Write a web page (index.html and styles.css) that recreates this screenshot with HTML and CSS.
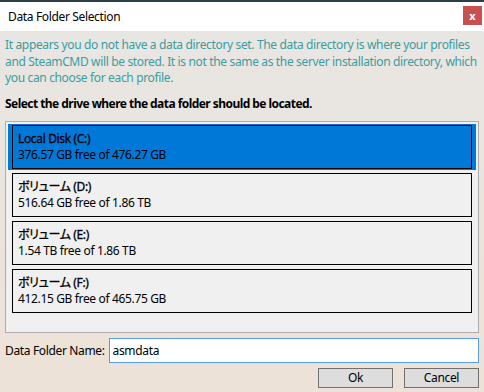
FILE: index.html
```html
<!DOCTYPE html>
<html>
<head>
    <title>Data Folder Selection</title>
    <link rel="stylesheet" href="styles.css">
</head>
<body>
    <div class="window">
        <div class="titlebar">
            <span class="title">Data Folder Selection</span>
            <span class="close">x</span>
        </div>
        <div class="content">
            <p class="info">It appears you do not have a data directory set. The data directory is where your profiles and SteamCMD will be stored. It is not the same as the server installation directory, which you can choose for each profile.</p>
            <p class="prompt">Select the drive where the data folder should be located.</p>

            <div class="drive-list">
                <div class="drive selected">
                    <div class="drive-box">
                        <div class="drive-name">Local Disk (C:)</div>
                        <div class="drive-space">376.57 GB free of 476.27 GB</div>
                    </div>
                </div>
                <div class="drive">
                    <div class="drive-box">
                        <div class="drive-name">ボリューム (D:)</div>
                        <div class="drive-space">516.64 GB free of 1.86 TB</div>
                    </div>
                </div>
                <div class="drive">
                    <div class="drive-box">
                        <div class="drive-name">ボリューム (E:)</div>
                        <div class="drive-space">1.54 TB free of 1.86 TB</div>
                    </div>
                </div>
                <div class="drive">
                    <div class="drive-box">
                        <div class="drive-name">ボリューム (F:)</div>
                        <div class="drive-space">412.15 GB free of 465.75 GB</div>
                    </div>
                </div>
            </div>

            <div class="name-row">
                <label class="name-label">Data Folder Name:</label>
                <div class="name-input">asmdata</div>
            </div>

            <div class="buttons">
                <button class="btn">Ok</button>
                <button class="btn">Cancel</button>
            </div>
        </div>
    </div>
</body>
</html>
```

FILE: styles.css
```css
html, body {
    margin: 0;
    padding: 0;
}
body {
    font-family: "Noto Sans", "Noto Sans CJK JP", sans-serif;
    font-size: 12px;
    letter-spacing: -0.35px;
    font-feature-settings: "palt";
    color: #000;
    width: 484px;
    height: 392px;
    overflow: hidden;
}
.window {
    display: flex;
    flex-direction: column;
    height: 392px;
}
.titlebar {
    height: 29px;
    border-top: 2px solid #2c3e45;
    background: white;
    display: flex;
    align-items: center;
    justify-content: space-between;
    padding-left: 8px;
}
.title {
    font-size: 12px;
}
.close {
    width: 19px;
    height: 19px;
    margin-right: 2px;
    margin-top: -2px;
    background: #c75050;
    color: white;
    font-weight: bold;
    font-size: 11px;
    letter-spacing: 0;
    display: flex;
    align-items: center;
    justify-content: center;
}
.content {
    flex: 1;
    background: linear-gradient(#e8e6e3, #ede2d7);
    padding: 6px 5px 0 5px;
    display: flex;
    flex-direction: column;
}
.info {
    margin: 0;
    color: #3a9d9f;
    line-height: 16.5px;
}
.prompt {
    margin: 9px 0 0 0;
    font-weight: bold;
    letter-spacing: -0.55px;
    line-height: 16px;
}
.drive-list {
    margin-top: 9px;
    height: 208px;
    border: 1px solid #abadb3;
    background: #f0f0f0;
    padding: 2px 2px 0 2px;
    display: flex;
    flex-direction: column;
    gap: 2px;
}
.drive {
    padding: 1px 4px;
}
.drive.selected {
    background: #0078d7;
}
.drive-box {
    border: 1px solid #000;
    height: 42px;
    padding: 0 5px;
    display: flex;
    flex-direction: column;
    justify-content: center;
    line-height: 16px;
}
.drive-name {
    -webkit-text-stroke: 0.3px #000;
}
.name-row {
    display: flex;
    align-items: center;
    margin-top: 5px;
    gap: 4px;
}
.name-input {
    flex: 1;
    height: 23px;
    border: 1px solid #569de5;
    background: white;
    padding-left: 3px;
    display: flex;
    align-items: center;
}
.buttons {
    display: flex;
    justify-content: flex-end;
    gap: 11px;
    margin-top: 5px;
}
.btn {
    width: 75px;
    height: 20px;
    background: #dddddd;
    border: 1px solid #707070;
    color: #000;
    font-family: inherit;
    font-size: 12px;
    letter-spacing: -0.35px;
    padding: 0;
}
```
